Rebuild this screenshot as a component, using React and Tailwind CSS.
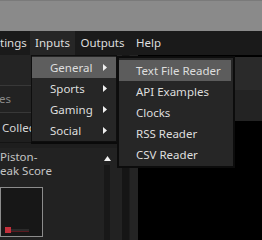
const font = { fontFamily: '"Noto Sans", "Open Sans", sans-serif' }

const Arrow = () => (
  <svg width="4" height="7" viewBox="0 0 4 7" className="absolute right-[9px] top-[7px]">
    <path d="M0 0 L4 3.5 L0 7 Z" fill="#f0f0f0" />
  </svg>
)

const App = () => {
  const mainItems = ["General", "Sports", "Gaming", "Social"]
  const subItems = ["Text File Reader", "API Examples", "Clocks", "RSS Reader", "CSV Reader"]

  return (
    <div
      className="relative w-[262px] h-[240px] overflow-hidden bg-black text-[11.5px] text-[#dedede]"
      style={font}
    >
      {/* window chrome */}
      <div className="h-[31px] bg-[#8a8a8a] border-t border-[#7a7a7a]" />

      {/* menu bar */}
      <div className="flex h-[24px] bg-[#1a1a1a] items-stretch">
        <div className="w-[30px] flex items-center">tings</div>
        <div className="w-[45px] flex items-center justify-center bg-[#262626]">Inputs</div>
        <div className="w-[55px] flex items-center justify-center">Outputs</div>
        <div className="w-[37px] flex items-center justify-center">Help</div>
      </div>

      {/* body */}
      <div className="flex h-[185px]">
        <div className="w-[122px] bg-[#222222] flex flex-col">
          <div className="h-[31px] bg-[#242424] border-b border-[#383838]" />
          <div className="h-[27px] flex items-center border-b border-[#383838] text-[#8a8a8a] -ml-[1px]">
            es
          </div>
          <div className="h-[29px] flex items-center pl-[2px] bg-[#1f1f1f] text-[#d6d6d6]">Collec</div>
          <div className="h-[6px] border-t border-[#141414] bg-[#1e1e1e]" />
          <div className="flex flex-1">
            <div className="flex-1 flex flex-col pt-[2px]">
              <div className="leading-[14px] text-[#c4c4c4]">
                Piston-
                <br />
                eak Score
              </div>
              <div className="mt-[9px] w-[43px] h-[50px] border border-[#8c8c8c] bg-[#171717] flex items-end pb-[3px] pl-[4px]">
                <div className="w-[6px] h-[6px] bg-[#c4303c]" />
                <div className="w-[18px] h-[3px] mb-[1px] bg-[#2a2a2a] border-b border-[#5a1a20]" />
              </div>
            </div>
            <div className="w-[6px] mr-[12px] flex flex-col items-center">
              <svg width="7" height="5" viewBox="0 0 7 5" className="mt-[8px]">
                <path d="M0 5 L3.5 0 L7 5 Z" fill="#f2f2f2" />
              </svg>
              <div className="mt-[4px] w-[6px] flex-1 bg-[#181818]" />
            </div>
          </div>
        </div>
        <div className="w-[7px] bg-[#151515]" />
        <div className="w-[1px] bg-[#1c1c1c]" />
        <div className="w-[8px] bg-[#242424]" />
        <div className="flex-1 flex flex-col pt-[2px]">
          <div className="h-[33px] bg-[#2a2a2a]" />
          <div className="h-[31px] bg-[#232323]" />
        </div>
      </div>

      {/* Inputs dropdown */}
      <div className="absolute left-[31px] top-[55px] w-[86px] h-[87px] bg-[#262626] border border-[#0e0e0e] shadow-[0_2px_0_#0a0a0a] py-[1px]">
        {mainItems.map((item, i) => (
          <div
            key={item}
            className={`relative h-[21px] flex items-center pl-[18px] ${i === 0 ? "bg-[#5e5e5e]" : ""}`}
          >
            {item}
            <Arrow />
          </div>
        ))}
      </div>

      {/* General submenu */}
      <div className="absolute left-[117px] top-[56px] w-[118px] h-[112px] bg-[#262626] border-2 border-[#0c0c0c] pt-[2px] pr-[2px]">
        {subItems.map((item, i) => (
          <div
            key={item}
            className={`h-[21px] flex items-center pl-[17px] ${i === 0 ? "bg-[#5c5c5c]" : ""}`}
          >
            {item}
          </div>
        ))}
      </div>
    </div>
  )
}

export default App
